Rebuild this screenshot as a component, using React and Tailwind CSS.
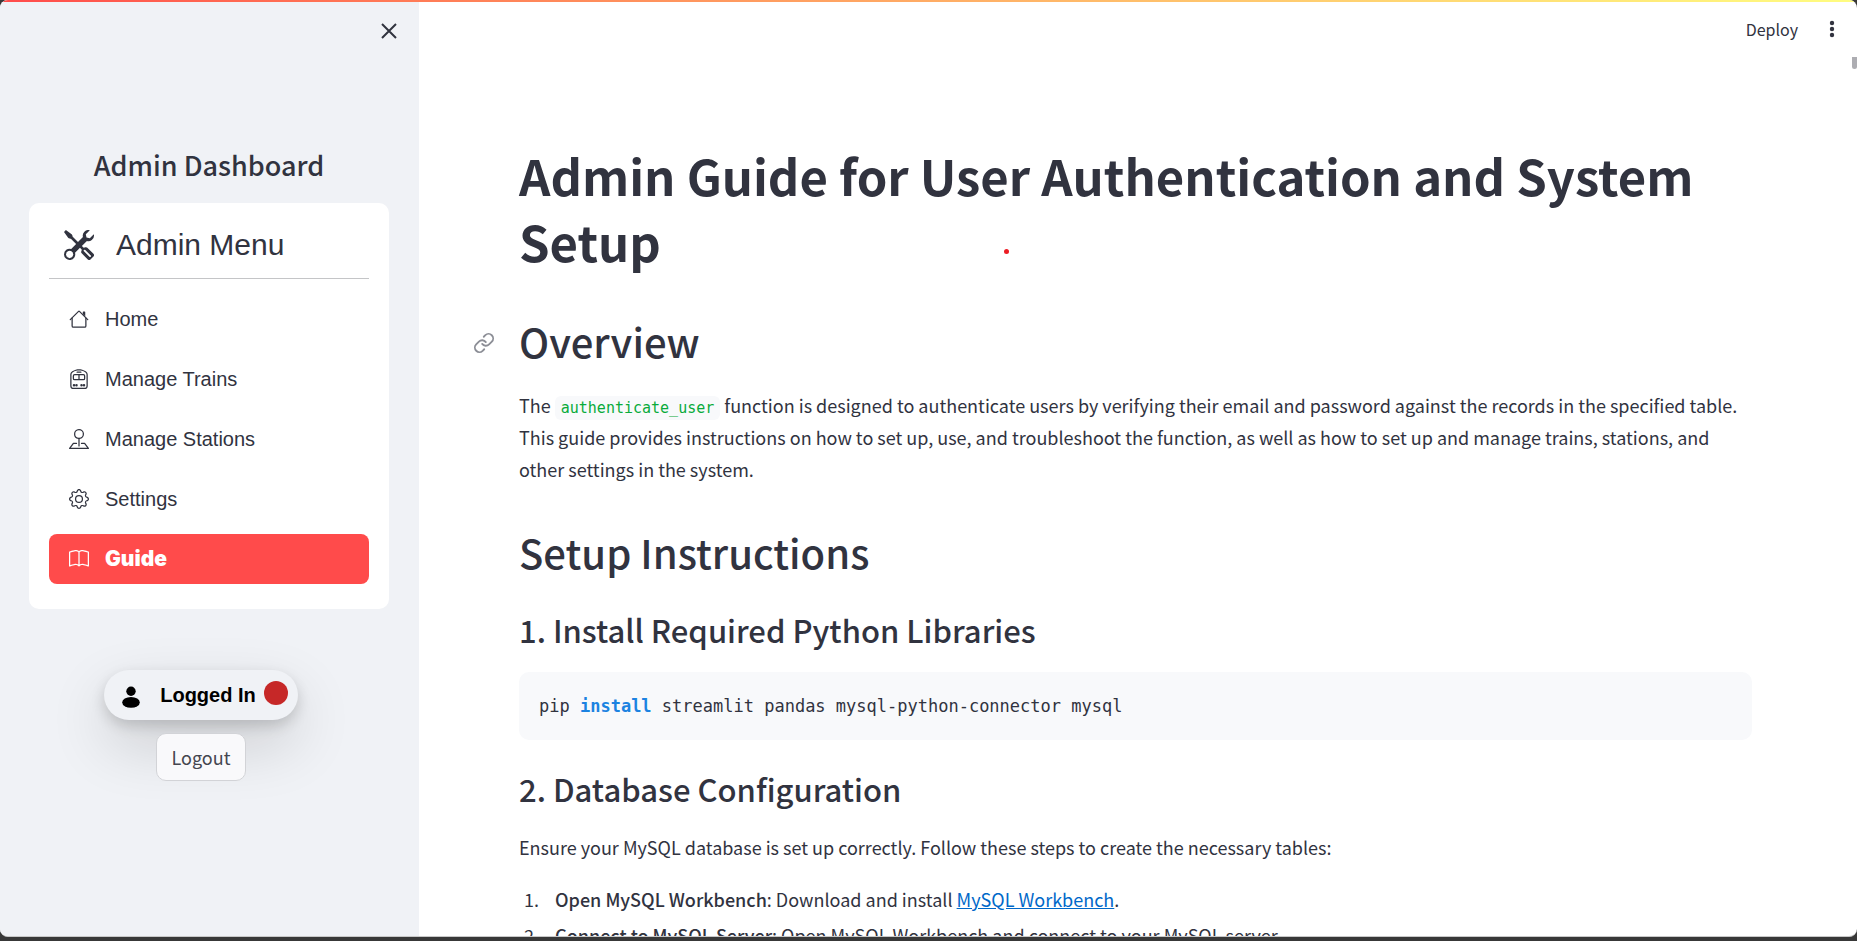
import React from "react";
import { BsTools, BsTrainFront, BsPinMap, BsGear, BsBook } from "react-icons/bs";
import { FiLink } from "react-icons/fi";

function HouseIcon({ className }) {
  return (
    <svg viewBox="0 0 16 16" fill="currentColor" className={className} aria-hidden="true">
      <path
        fillRule="evenodd"
        d="M2 13.5V7h1v6.5a.5.5 0 0 0 .5.5h9a.5.5 0 0 0 .5-.5V7h1v6.5a1.5 1.5 0 0 1-1.5 1.5h-9A1.5 1.5 0 0 1 2 13.5zm11-11V6l-2-2V2.5a.5.5 0 0 1 .5-.5h1a.5.5 0 0 1 .5.5z"
      />
      <path
        fillRule="evenodd"
        d="M7.293 1.5a1 1 0 0 1 1.414 0l6.647 6.646a.5.5 0 0 1-.708.708L8 2.207 1.354 8.854a.5.5 0 1 1-.708-.708L7.293 1.5z"
      />
    </svg>
  );
}

const menu = [
  { label: "Home", Icon: HouseIcon },
  { label: "Manage Trains", Icon: BsTrainFront },
  { label: "Manage Stations", Icon: BsPinMap },
  { label: "Settings", Icon: BsGear },
  { label: "Guide", Icon: BsBook, active: true },
];

function Sidebar() {
  return (
    <aside className="flex w-[419px] shrink-0 flex-col bg-[#f0f2f6] pr-[30px] pl-[29px]">
      <div className="flex h-[62px] items-center justify-end">
        <button type="button" aria-label="Close sidebar" className="-mr-4 flex h-8 w-8 items-center justify-center">
          <svg viewBox="0 0 16 16" className="h-4 w-4" fill="none" stroke="currentColor" strokeWidth="2" aria-hidden="true">
            <path d="M1 1l14 14M15 1L1 15" />
          </svg>
        </button>
      </div>

      <h2 className="mt-[85px] pb-[20px] text-center text-[27px] leading-[36px] font-medium">Admin Dashboard</h2>

      <nav className="rounded-[10px] bg-white px-5 pb-[25px] font-['Liberation_Sans',Arial,sans-serif]">
        <div className="flex h-[76px] items-center gap-[22px] border-b border-[#c4c5c7] pt-2 pl-[15px] text-[30px]">
          <BsTools className="h-[30px] w-[30px]" aria-hidden="true" />
          <span>Admin Menu</span>
        </div>
        <ul className="mt-[15px] flex flex-col gap-[10px] text-xl">
          {menu.map(({ label, Icon, active }) => (
            <li key={label}>
              <a
                href={"#" + label.toLowerCase().replace(" ", "-")}
                className={
                  active
                    ? "flex h-[50px] items-center gap-4 rounded-lg bg-[#ff4b4b] px-5 font-['Inter',sans-serif] text-[21px] font-black text-white"
                    : "flex h-[50px] items-center gap-4 rounded-lg px-5"
                }
              >
                <Icon className="h-5 w-5" />
                <span>{label}</span>
              </a>
            </li>
          ))}
        </ul>
      </nav>

      <div className="mt-[61px] flex flex-col items-center gap-[13px] pr-4">
        <div className="flex h-[50px] items-center rounded-full bg-[#f0f2f6] pr-[10px] pl-[18px] font-['Liberation_Sans',Arial,sans-serif] text-xl font-bold text-black shadow-[0_24px_60px_rgba(0,0,0,0.16),0_6px_14px_rgba(0,0,0,0.16)]">
          <svg viewBox="0 0 18 22" className="mt-1 h-[22px] w-[18px]" aria-hidden="true">
            <circle cx="9" cy="5.2" r="4.7" />
            <ellipse cx="9" cy="16.4" rx="8.8" ry="5.4" />
          </svg>
          <span className="ml-5">Logged In</span>
          <span className="mb-1 ml-2 h-6 w-6 rounded-full bg-[#c62828]" />
        </div>
        <button
          type="button"
          className="relative h-12 rounded-[10px] border border-[#d2d3d7] bg-[#f9f9fb] px-[15px] text-lg leading-6 text-[#44464f]"
        >
          Logout
        </button>
      </div>
    </aside>
  );
}

function Guide() {
  return (
    <article className="px-[100px] text-lg leading-8">
      <h1 className="mt-[84px] text-[49px] leading-[66px] font-bold">
        Admin Guide for User Authentication and System Setup
      </h1>

      <h2 className="relative mt-10 text-[40px] leading-[54px] font-medium">
        <a href="#overview" aria-label="Link to Overview" className="absolute top-[18px] -left-[46px] text-[#8c8e96]">
          <FiLink className="h-[22px] w-[22px]" />
        </a>
        Overview
      </h2>
      <p className="mt-[21px]">
        The{" "}
        <code className="rounded-md bg-[#f8f9fb] px-[6px] py-[3px] font-['DejaVu_Sans_Mono',monospace] text-[15px] leading-6 text-[#09ab3b]">
          authenticate_user
        </code>{" "}
        function is designed to authenticate users by verifying their email and password against the records in the
        specified table. This guide provides instructions on how to set up, use, and troubleshoot the function, as well
        as how to set up and manage trains, stations, and other settings in the system.
      </p>

      <h2 className="mt-10 text-[40px] leading-[54px] font-medium">Setup Instructions</h2>

      <h3 className="mt-[30px] text-[31px] leading-[42px] font-medium">1. Install Required Python Libraries</h3>
      <pre className="mt-[21px] rounded-[10px] bg-[#f8f9fb] px-5 py-[18px] font-['DejaVu_Sans_Mono',monospace] text-[17px] leading-8">
        <code className="font-['DejaVu_Sans_Mono',monospace]">
          pip <span className="font-bold text-[#1c83e1]">install</span> streamlit pandas mysql-python-connector mysql
        </code>
      </pre>

      <h3 className="mt-[28px] text-[31px] leading-[42px] font-medium">2. Database Configuration</h3>
      <p className="mt-[21px]">
        Ensure your MySQL database is set up correctly. Follow these steps to create the necessary tables:
      </p>
      <ol className="mt-5 flex list-decimal flex-col gap-1 pl-6">
        <li className="pl-3">
          <strong className="font-medium">Open MySQL Workbench</strong>: Download and install{" "}
          <a href="#mysql-workbench" className="text-[#0068c9] underline">
            MySQL Workbench
          </a>
          .
        </li>
        <li className="pl-3">
          <strong className="font-medium">Connect to MySQL Server</strong>: Open MySQL Workbench and connect to your
          MySQL server.
        </li>
      </ol>
    </article>
  );
}

export default function App() {
  return (
    <div className="h-screen overflow-hidden bg-[#383838] pb-1 font-['Noto_Sans_CJK_SC','Open_Sans',sans-serif] text-[#31333f]">
      <div className="relative flex h-full overflow-hidden rounded-[8px] border-b border-[#c8c8c8] bg-white">
        <div className="absolute inset-x-0 top-0 h-[2px] bg-linear-to-r from-[#ff4b4b] to-[#fffd80]" />
        <Sidebar />
        <main className="relative min-w-0 flex-1 overflow-hidden pr-[5px]">
          <header className="flex h-[58px] items-center justify-end gap-[26px] pr-3">
            <button type="button" className="text-base leading-6">
              Deploy
            </button>
            <button type="button" aria-label="Main menu" className="flex h-6 w-4 items-center justify-center">
              <svg viewBox="0 0 6 18" className="h-[18px] w-[6px]" fill="currentColor" aria-hidden="true">
                <circle cx="3" cy="3" r="2.2" />
                <circle cx="3" cy="9" r="2.2" />
                <circle cx="3" cy="15" r="2.2" />
              </svg>
            </button>
          </header>
          <Guide />
          <div className="absolute top-[57px] right-0 h-3 w-[5px] rounded-b-[3px] bg-[#adadb2]" />
          <div className="absolute top-[249px] left-[585px] h-[5px] w-[5px] rounded-full bg-[#ec1c24]" />
        </main>
      </div>
    </div>
  );
}
